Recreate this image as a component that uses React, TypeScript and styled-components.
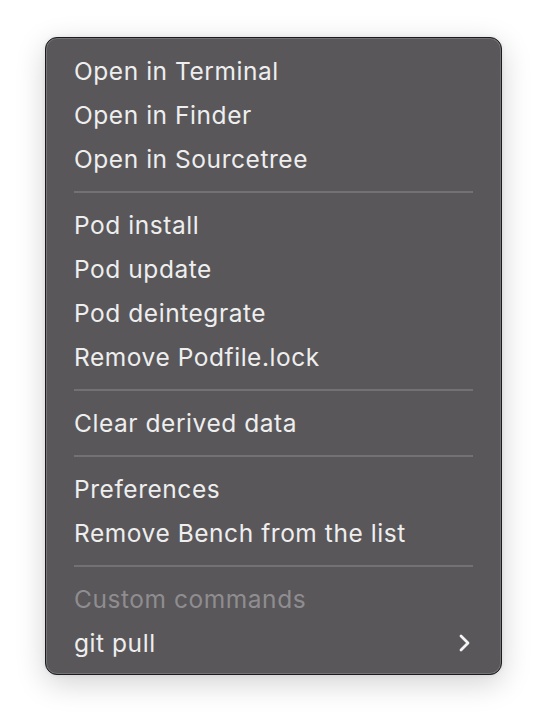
import React from "react";
import styled, { createGlobalStyle } from "styled-components";

const Global = createGlobalStyle`
  html, body { margin: 0; padding: 0; background: #ffffff; }
  body { font-family: Inter, "Noto Sans", "Liberation Sans", sans-serif; }
`;

const Page = styled.div`
  width: 548px;
  height: 728px;
  box-sizing: border-box;
  padding: 37px 46px 0 45px;
`;

const Menu = styled.div`
  width: 457px;
  box-sizing: border-box;
  background: #59575a;
  border-radius: 12px;
  border: 1px solid #1c1c1e;
  box-shadow: inset 0 0 0 1px #757376, 0 8px 30px rgba(0, 0, 0, 0.18), 0 0 4px rgba(0,0,0,0.08);
  padding: 11px 28px 9px 28px;
  display: flex;
  flex-direction: column;
`;

const Item = styled.div<{ $disabled?: boolean }>`
  height: 44px;
  display: flex;
  align-items: center;
  justify-content: space-between;
  font-size: 24.5px;
  letter-spacing: 0.55px;
  color: ${(p) => (p.$disabled ? "#8f8d90" : "#eeeeee")};
`;

const Separator = styled.div`
  height: 22px;
  display: flex;
  align-items: center;
  &::after {
    content: "";
    flex: 1;
    height: 2px;
    background: #737174;
  }
`;

const Chevron = () => (
  <svg width="14" height="20" viewBox="0 0 14 20" style={{ marginRight: 1 }}>
    <path d="M3 3 L10 10 L3 17" fill="none" stroke="#f4f4f4" strokeWidth="2.8" strokeLinecap="round" strokeLinejoin="round" />
  </svg>
);

export default function App() {
  return (
    <>
      <Global />
      <Page>
        <Menu>
          <Item>Open in Terminal</Item>
          <Item>Open in Finder</Item>
          <Item>Open in Sourcetree</Item>
          <Separator />
          <Item>Pod install</Item>
          <Item>Pod update</Item>
          <Item>Pod deintegrate</Item>
          <Item>Remove Podfile.lock</Item>
          <Separator />
          <Item>Clear derived data</Item>
          <Separator />
          <Item>Preferences</Item>
          <Item>Remove Bench from the list</Item>
          <Separator />
          <Item $disabled>Custom commands</Item>
          <Item>
            git pull
            <Chevron />
          </Item>
        </Menu>
      </Page>
    </>
  );
}
